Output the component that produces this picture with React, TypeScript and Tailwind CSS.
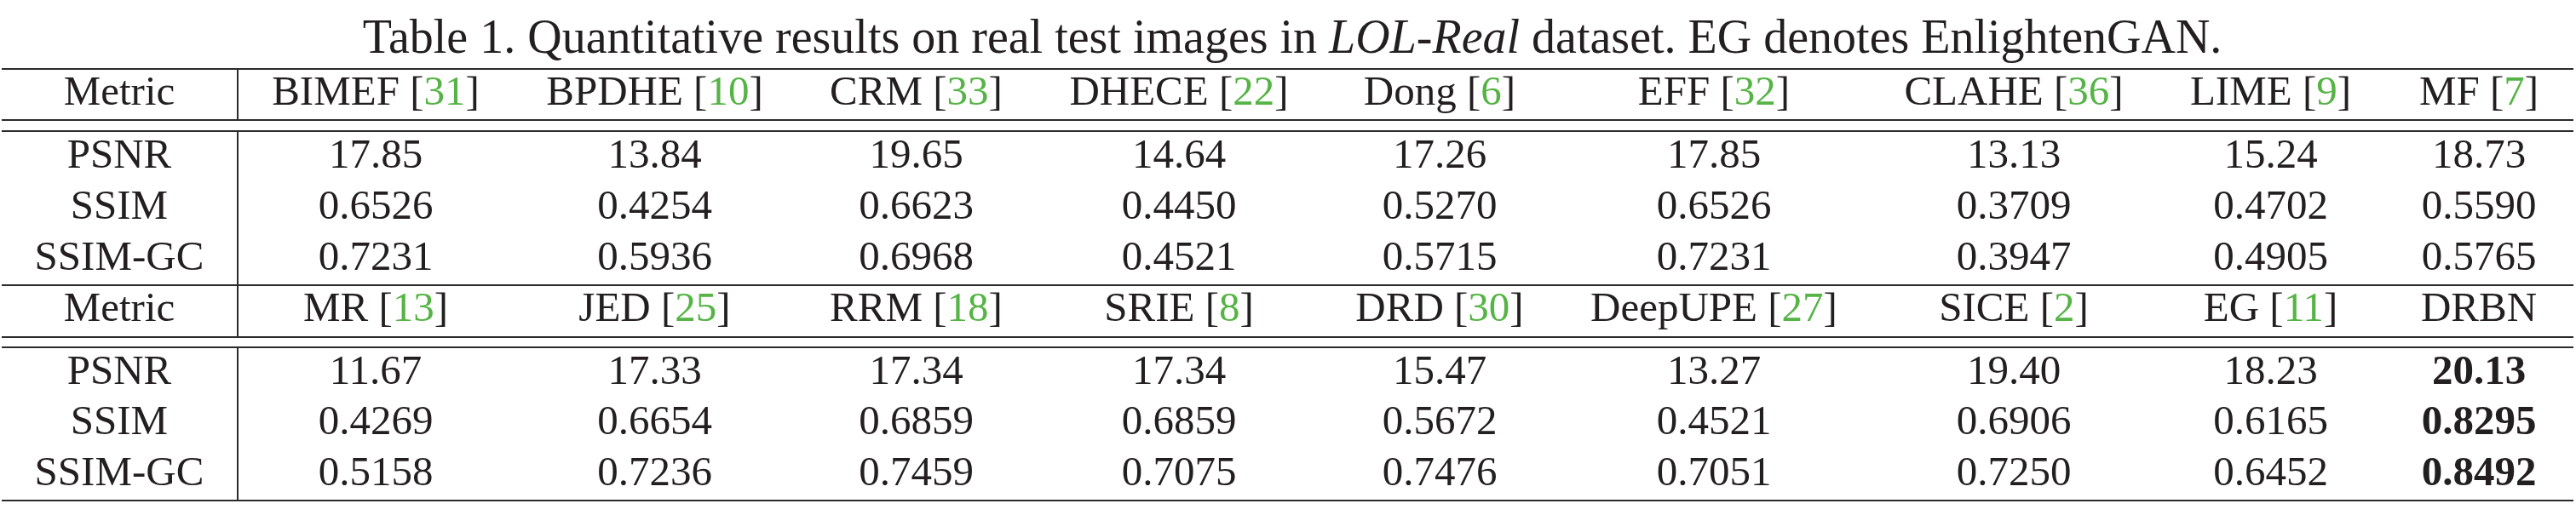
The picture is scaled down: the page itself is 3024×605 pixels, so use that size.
import React from 'react';

interface HeadProps {
	name: string;
	cite?: string;
}

interface RowProps {
	metric: string;
	values: string[];
	height: string;
	bestLast?: boolean;
}

const cols =
	'grid grid-cols-[278px_322px_333px_281px_336px_276px_368px_336px_267px_222px]';

const topHeads: HeadProps[] = [
	{ name: 'BIMEF', cite: '31' },
	{ name: 'BPDHE', cite: '10' },
	{ name: 'CRM', cite: '33' },
	{ name: 'DHECE', cite: '22' },
	{ name: 'Dong', cite: '6' },
	{ name: 'EFF', cite: '32' },
	{ name: 'CLAHE', cite: '36' },
	{ name: 'LIME', cite: '9' },
	{ name: 'MF', cite: '7' },
];

const bottomHeads: HeadProps[] = [
	{ name: 'MR', cite: '13' },
	{ name: 'JED', cite: '25' },
	{ name: 'RRM', cite: '18' },
	{ name: 'SRIE', cite: '8' },
	{ name: 'DRD', cite: '30' },
	{ name: 'DeepUPE', cite: '27' },
	{ name: 'SICE', cite: '2' },
	{ name: 'EG', cite: '11' },
	{ name: 'DRBN' },
];

const topRows = [
	['PSNR', '17.85', '13.84', '19.65', '14.64', '17.26', '17.85', '13.13', '15.24', '18.73'],
	['SSIM', '0.6526', '0.4254', '0.6623', '0.4450', '0.5270', '0.6526', '0.3709', '0.4702', '0.5590'],
	['SSIM-GC', '0.7231', '0.5936', '0.6968', '0.4521', '0.5715', '0.7231', '0.3947', '0.4905', '0.5765'],
];

const bottomRows = [
	['PSNR', '11.67', '17.33', '17.34', '17.34', '15.47', '13.27', '19.40', '18.23', '20.13'],
	['SSIM', '0.4269', '0.6654', '0.6859', '0.6859', '0.5672', '0.4521', '0.6906', '0.6165', '0.8295'],
	['SSIM-GC', '0.5158', '0.7236', '0.7459', '0.7075', '0.7476', '0.7051', '0.7250', '0.6452', '0.8492'],
];

const Rule = () => <div className="h-[2px] w-full bg-[#2b2b2b]" />;

const HeadRow: React.FC<{ heads: HeadProps[]; height: string }> = (props) => {
	return (
		<div className={`${cols} ${props.height}`}>
			<div className="border-r-2 border-[#2b2b2b] text-center">Metric</div>
			{props.heads.map((h) => (
				<div key={h.name} className="text-center whitespace-nowrap">
					{h.name}
					{h.cite && (
						<>
							{' '}[<span className="text-[#55b445]">{h.cite}</span>]
						</>
					)}
				</div>
			))}
		</div>
	);
};

const DataRow: React.FC<RowProps> = (props) => {
	return (
		<div className={`${cols} ${props.height}`}>
			<div className="border-r-2 border-[#2b2b2b] pt-[1px] text-center">
				{props.metric}
			</div>
			{props.values.map((v, i) => (
				<div
					key={i}
					className={
						props.bestLast && i === props.values.length - 1
							? 'pt-[1px] text-center font-bold'
							: 'pt-[1px] text-center'
					}
				>
					{v}
				</div>
			))}
		</div>
	);
};

export default function App() {
	return (
		<div className="w-[3024px] h-[605px] overflow-hidden bg-white text-[#231f20] font-['Liberation_Serif','Times_New_Roman',serif]">
			<p className="pt-[15px] pl-[10px] text-center text-[56px] leading-none whitespace-nowrap">
				Table 1. Quantitative results on real test images in <i>LOL-Real</i>{' '}
				dataset. EG denotes EnlightenGAN.
			</p>

			<div className="mt-[9px] ml-[2px] w-[3019px] text-[49px] leading-none">
				<Rule />
				<HeadRow heads={topHeads} height="h-[58px]" />
				<Rule />
				<div className="h-[11px]" />
				<Rule />
				{topRows.map((r, i) => (
					<DataRow
						key={r[0]}
						metric={r[0]}
						values={r.slice(1)}
						height={i === 2 ? 'h-[59px]' : 'h-[60px]'}
					/>
				))}
				<Rule />
				<HeadRow heads={bottomHeads} height="h-[59px]" />
				<Rule />
				<div className="h-[10px]" />
				<Rule />
				{bottomRows.map((r, i) => (
					<DataRow
						key={r[0]}
						metric={r[0]}
						values={r.slice(1)}
						height={i === 1 ? 'h-[60px]' : 'h-[59px]'}
						bestLast
					/>
				))}
				<Rule />
			</div>
		</div>
	);
}
